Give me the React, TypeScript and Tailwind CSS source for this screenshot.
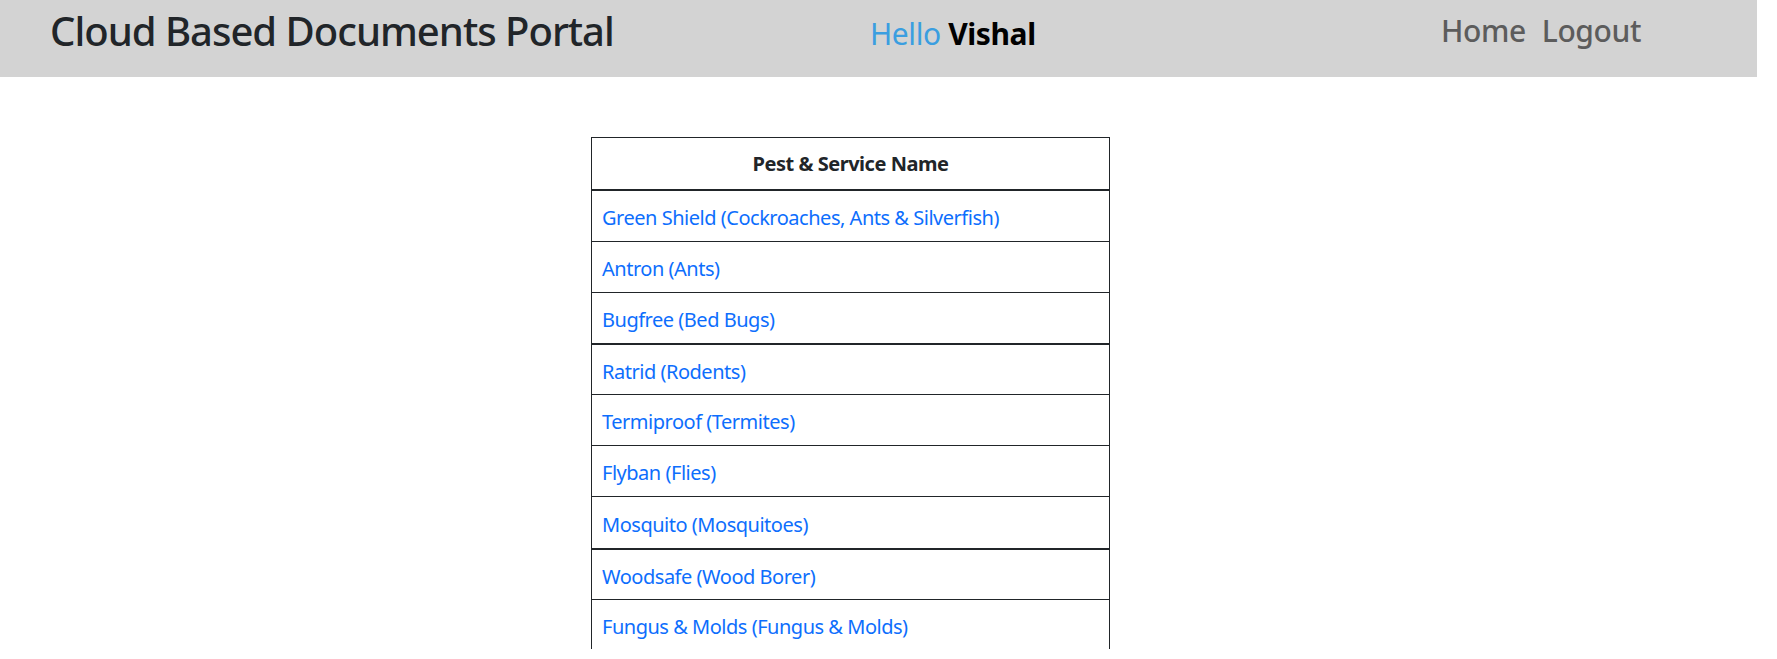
const services = [
  { name: "Green Shield (Cockroaches, Ants & Silverfish)", row: "h-[51px] border-b" },
  { name: "Antron (Ants)", row: "h-[51px] border-b" },
  { name: "Bugfree (Bed Bugs)", row: "h-[52px] border-b-2" },
  { name: "Ratrid (Rodents)", row: "h-[50px] border-b" },
  { name: "Termiproof (Termites)", row: "h-[51px] border-b" },
  { name: "Flyban (Flies)", row: "h-[51px] border-b" },
  { name: "Mosquito (Mosquitoes)", row: "h-[53px] border-b-2" },
  { name: "Woodsafe (Wood Borer)", row: "h-[50px] border-b" },
  { name: "Fungus & Molds (Fungus & Molds)", row: "h-[51px] border-b" },
];

function Header() {
  return (
    <div className="flex items-start w-[1757px] h-[77px] pl-[50px] bg-[#d3d3d3] tracking-[-0.4px]">
      <div className="w-[820px] mt-[7px]">
        <h1 className="text-[40px] leading-[48px] font-medium tracking-[-1px] text-[#212529]">
          Cloud Based Documents Portal
        </h1>
      </div>
      <div className="w-[571px] mt-[16px] text-[30px] leading-[36px]">
        <span className="text-[#3a9ee0]">Hello</span>{" "}
        <span className="font-bold text-black">Vishal</span>
      </div>
      <nav className="flex gap-[16px] mt-[13px] text-[30px] leading-[36px] font-medium text-[#5c5c5c]">
        <a href="#">Home</a>
        <a href="#">Logout</a>
      </nav>
    </div>
  );
}

export default function App() {
  return (
    <div className="h-[659px] overflow-hidden bg-white font-['Noto_Sans',sans-serif]">
      <Header />
      <div className="h-[572px] overflow-hidden pt-[60px]">
        <div className="ml-[591px] w-[519px] border-x border-t border-[#212529] text-[20px] leading-[30px] tracking-[-0.48px]">
          <div className="h-[53px] flex items-center justify-center border-b-2 border-[#212529] font-bold text-[#212529]">
            Pest &amp; Service Name
          </div>
          {services.map((s) => (
            <div
              key={s.name}
              className={`${s.row} flex items-center px-[10px] pt-[4px] border-[#212529]`}
            >
              <a href="#" className="text-[#0d6efd]">
                {s.name}
              </a>
            </div>
          ))}
        </div>
      </div>
    </div>
  );
}
